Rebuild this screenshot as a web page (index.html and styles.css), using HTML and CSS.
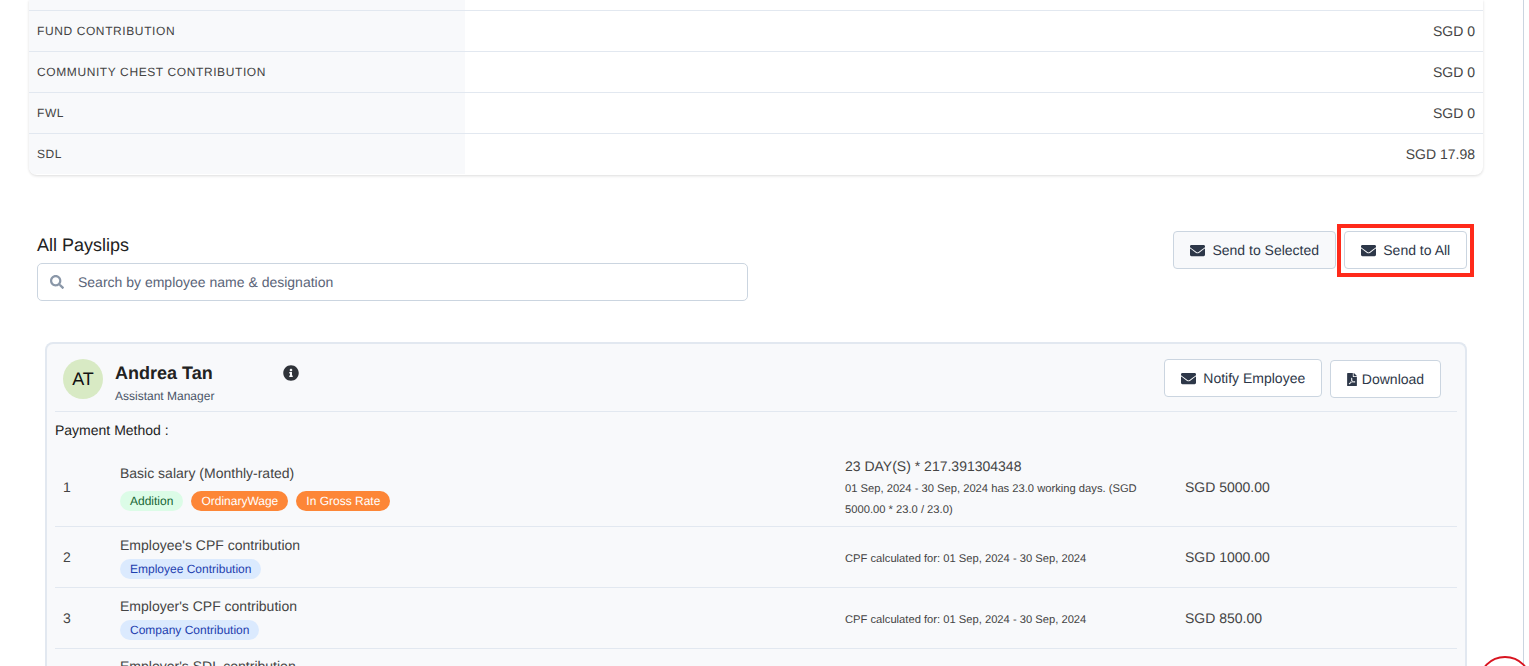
FILE: index.html
```html
<!DOCTYPE html>
<html lang="en">
<head>
<meta charset="utf-8">
<title>All Payslips</title>
<link rel="stylesheet" href="styles.css">
</head>
<body>
<svg class="sprite" width="0" height="0" aria-hidden="true">
  <symbol id="i-env" viewBox="0 0 512 512"><path d="M502.3 190.8c3.9-3.1 9.7-.2 9.7 4.7V400c0 26.5-21.5 48-48 48H48c-26.5 0-48-21.5-48-48V195.6c0-5 5.7-7.8 9.7-4.7 22.4 17.4 52.1 39.5 154.1 113.6 21.1 15.4 56.7 47.8 92.2 47.6 35.7.3 72-32.8 92.3-47.6 102-74.1 131.6-96.3 154-113.7zM256 320c23.2.4 56.6-29.2 73.4-41.4 132.7-96.3 142.8-104.7 173.4-128.7 5.8-4.5 9.2-11.5 9.2-18.9v-19c0-26.5-21.5-48-48-48H48C21.5 64 0 85.5 0 112v19c0 7.4 3.4 14.3 9.2 18.9 30.6 23.9 40.7 32.4 173.4 128.7 16.8 12.2 50.2 41.8 73.4 41.4z"/></symbol>
</svg>
<div class="page">
  <section class="summary">
    <div class="sum-row stub"><div class="sum-label"></div><div class="sum-value"></div></div>
    <div class="sum-row"><div class="sum-label">FUND CONTRIBUTION</div><div class="sum-value">SGD 0</div></div>
    <div class="sum-row"><div class="sum-label">COMMUNITY CHEST CONTRIBUTION</div><div class="sum-value">SGD 0</div></div>
    <div class="sum-row"><div class="sum-label">FWL</div><div class="sum-value">SGD 0</div></div>
    <div class="sum-row"><div class="sum-label">SDL</div><div class="sum-value">SGD 17.98</div></div>
  </section>

  <section class="list-head">
    <div class="list-left">
      <h2 class="list-title">All Payslips</h2>
      <div class="search">
        <svg class="search-icon" viewBox="0 0 512 512"><path d="M505 442.7L405.3 343c-4.5-4.5-10.6-7-17-7H372c27.6-35.3 44-79.7 44-128C416 93.1 322.9 0 208 0S0 93.1 0 208s93.1 208 208 208c48.3 0 92.7-16.4 128-44v16.3c0 6.4 2.5 12.5 7 17l99.7 99.7c9.4 9.4 24.6 9.4 33.9 0l28.3-28.3c9.4-9.4 9.4-24.6.1-34zM208 336c-70.7 0-128-57.2-128-128 0-70.7 57.2-128 128-128 70.7 0 128 57.2 128 128 0 70.7-57.2 128-128 128z"/></svg>
        <span class="search-text">Search by employee name &amp; designation</span>
      </div>
    </div>
    <div class="list-actions">
      <button class="btn btn-muted btn-selected"><svg class="btn-icon"><use href="#i-env"/></svg>Send to Selected</button>
      <div class="highlight">
        <button class="btn btn-all"><svg class="btn-icon"><use href="#i-env"/></svg>Send to All</button>
      </div>
    </div>
  </section>

  <section class="slip">
    <header class="slip-head">
      <div class="avatar">AT</div>
      <div class="person">
        <div class="person-name">Andrea Tan</div>
        <div class="person-role">Assistant Manager</div>
      </div>
      <svg class="info" viewBox="0 0 512 512"><path d="M256 8C119.043 8 8 119.083 8 256c0 136.997 111.043 248 248 248s248-111.003 248-248C504 119.083 392.957 8 256 8zm0 110c23.196 0 42 18.804 42 42s-18.804 42-42 42-42-18.804-42-42 18.804-42 42-42zm56 254c0 6.627-5.373 12-12 12h-88c-6.627 0-12-5.373-12-12v-24c0-6.627 5.373-12 12-12h12v-64h-12c-6.627 0-12-5.373-12-12v-24c0-6.627 5.373-12 12-12h64c6.627 0 12 5.373 12 12v100h12c6.627 0 12 5.373 12 12v24z"/></svg>
      <div class="slip-actions">
        <button class="btn btn-notify"><svg class="btn-icon"><use href="#i-env"/></svg>Notify Employee</button>
        <button class="btn btn-download"><svg class="pdf-icon" viewBox="0 0 384 512"><path d="M181.9 256.1c-5-16-4.9-46.9-2-46.9 8.4 0 7.6 36.9 2 46.9zm-1.7 47.2c-7.7 20.2-17.3 43.3-28.4 62.7 18.3-7 39-17.2 62.9-21.9-12.7-9.6-24.9-23.4-34.5-40.8zM86.1 428.1c0 .8 13.2-5.4 34.9-40.2-6.7 6.3-29.1 24.5-34.9 40.2zM248 160h136v328c0 13.3-10.7 24-24 24H24c-13.3 0-24-10.7-24-24V24C0 10.7 10.7 0 24 0h200v136c0 13.2 10.8 24 24 24zm-8 171.8c-20-12.2-33.3-29-42.7-53.8 4.5-18.5 11.6-46.6 6.2-64.2-4.7-29.4-42.4-26.5-47.8-6.8-5 18.3-.4 44.1 8.1 77-11.6 27.6-28.7 64.6-40.8 85.8-.1 0-.1.1-.2.1-27.1 13.9-73.6 44.5-54.5 68 5.6 6.9 16 10 21.5 10 17.9 0 35.7-18 61.1-61.8 25.8-8.5 54.1-19.1 79-23.2 21.7 11.8 47.1 19.5 64 19.5 29.2 0 31.2-32 19.7-43.4-13.9-13.6-54.3-9.7-73.6-7.2zM377 105L279 7c-4.5-4.5-10.6-7-17-7h-6v128h128v-6.1c0-6.3-2.5-12.4-7-16.9zm-74.1 255.3c4.1-2.7-2.5-11.9-42.8-9 37.1 15.8 42.8 9 42.8 9z"/></svg>Download</button>
      </div>
    </header>
    <div class="payment">Payment Method :</div>
    <div class="line line-tall">
      <div class="line-no">1</div>
      <div class="line-main">
        <div class="line-name">Basic salary (Monthly-rated)</div>
        <div class="tags tags-spaced">
          <span class="tag tag-green">Addition</span>
          <span class="tag tag-orange">OrdinaryWage</span>
          <span class="tag tag-orange">In Gross Rate</span>
        </div>
      </div>
      <div class="line-detail">
        <div class="detail-calc">23 DAY(S) * 217.391304348</div>
        <div class="detail-note detail-wrap">01 Sep, 2024 - 30 Sep, 2024 has 23.0 working days. (SGD 5000.00 * 23.0 / 23.0)</div>
      </div>
      <div class="line-amount">SGD 5000.00</div>
    </div>
    <div class="line">
      <div class="line-no">2</div>
      <div class="line-main">
        <div class="line-name">Employee's CPF contribution</div>
        <div class="tags"><span class="tag tag-blue">Employee Contribution</span></div>
      </div>
      <div class="line-detail"><div class="detail-note detail-low">CPF calculated for: 01 Sep, 2024 - 30 Sep, 2024</div></div>
      <div class="line-amount">SGD 1000.00</div>
    </div>
    <div class="line">
      <div class="line-no">3</div>
      <div class="line-main">
        <div class="line-name">Employer's CPF contribution</div>
        <div class="tags"><span class="tag tag-blue">Company Contribution</span></div>
      </div>
      <div class="line-detail"><div class="detail-note detail-low">CPF calculated for: 01 Sep, 2024 - 30 Sep, 2024</div></div>
      <div class="line-amount">SGD 850.00</div>
    </div>
    <div class="line">
      <div class="line-main line-main-last">
        <div class="line-name">Employer's SDL contribution</div>
      </div>
    </div>
  </section>
</div>
<div class="fab"></div>
</body>
</html>
```
FILE: styles.css
```css
* { box-sizing: border-box; }
html, body { margin: 0; padding: 0; height: 100%; overflow: hidden; background: #fff; }
body { font-family: "Liberation Sans", Arial, sans-serif; color: #222; position: relative; text-rendering: geometricPrecision; }
.sprite { position: absolute; }
.page { width: 1524px; height: 666px; border-right: 1px solid #cbd5e0; overflow: hidden; padding-left: 29px; }

.summary { width: 1454px; border-radius: 0 0 8px 8px; box-shadow: 0 1px 3px rgba(0,0,0,.14); background: #fff; overflow: hidden; }
.sum-row { display: flex; height: 41px; border-bottom: 1px solid #e2e8f0; font-size: 14px; color: #444; }
.sum-row:last-child { border-bottom-color: transparent; }
.stub { height: 11px; }
.sum-label { width: 436px; background: #f8f9fb; padding-left: 8px; display: flex; align-items: center; font-size: 12px; letter-spacing: .6px; }
.sum-value { flex: 1; display: flex; align-items: center; justify-content: flex-end; padding-right: 8px; }

.list-head { display: flex; justify-content: space-between; width: 1445px; margin-top: 49px; padding-left: 8px; height: 118px; }
.list-left { width: 711px; padding-top: 10px; }
.list-title { margin: 0 0 7px; font-size: 18px; font-weight: 400; line-height: 22px; color: #222; }
.search { height: 38px; border: 1px solid #cbd5e0; border-radius: 5px; display: flex; align-items: center; padding-left: 12px; background: #fff; }
.search-icon { width: 14px; height: 14px; fill: #8a97a8; margin-right: 14px; }
.search-text { font-size: 14px; color: #5a6478; }
.list-actions { display: flex; align-items: flex-start; gap: 1px; }
.btn { display: inline-flex; align-items: center; justify-content: center; height: 38px; border: 1px solid #cbd5e0; border-radius: 4px; background: #fff; color: #2d3748; font: 14px "Liberation Sans", Arial, sans-serif; text-rendering: geometricPrecision; padding: 0; }
.btn-muted { background: #f8f9fb; }
.btn-selected { width: 163px; margin-top: 7px; }
.btn-all { width: 123px; }
.btn-icon { width: 15px; height: 15px; fill: #2d3748; margin-right: 7.5px; }
.pdf-icon { width: 10px; height: 13px; fill: #2d3748; margin-right: 5px; }
.highlight { border: 4px solid #ff2a1a; padding: 3px 3px 4px; }

.slip { width: 1422px; margin-left: 16px; border: 2px solid #e2e8f0; border-bottom: 0; border-radius: 8px 8px 0 0; background: #f8f9fb; padding: 0 8px; }
.slip-head { display: flex; align-items: flex-start; height: 68px; padding: 15px 0 0 8px; border-bottom: 1px solid #e2e8f0; }
.avatar { width: 40px; height: 40px; border-radius: 50%; background: #d8eac4; color: #111; font-size: 18px; display: flex; align-items: center; justify-content: center; flex: none; }
.person { margin-left: 12px; width: 168px; }
.person-name { font-size: 18px; font-weight: 700; line-height: 28px; color: #222; }
.person-role { font-size: 12px; line-height: 16px; color: #4a5568; margin-top: 1px; }
.info { width: 16px; height: 16px; fill: #2f3339; margin-top: 6px; }
.slip-actions { margin-left: auto; display: flex; align-items: flex-start; gap: 8px; padding-right: 16px; }
.btn-notify { width: 158px; }
.btn-download { width: 111px; margin-top: 1px; }
.payment { font-size: 14px; line-height: 20px; padding: 8px 0 7px; color: #222; }
.line { display: flex; align-items: center; height: 61px; border-bottom: 1px solid #e2e8f0; font-size: 14px; color: #444; }
.line-tall { height: 80px; }
.line-no { width: 65px; padding-left: 8px; flex: none; }
.line-main { width: 725px; flex: none; }
.line-main-last { align-self: flex-start; margin-left: 65px; padding-top: 7px; }
.line-name { line-height: 20px; }
.tags { display: flex; gap: 8px; margin: 4px 0 1px; }
.tags-spaced { margin: 8px 0 0; }
.tag { font-size: 12px; line-height: 20px; padding: 0 10px; border-radius: 10px; }
.tag-green { background: #dcfce7; color: #166534; }
.tag-orange { background: #fd8637; color: #fff; }
.tag-blue { background: #dbeafe; color: #1e40af; }
.line-detail { width: 340px; flex: none; }
.detail-calc { line-height: 20px; margin-top: 4px; }
.detail-note { font-size: 11.2px; line-height: 21px; width: 300px; }
.detail-wrap { margin-top: 3px; }
.detail-low { padding-top: 5px; }
.line-amount { flex: 1; }
.fab { position: fixed; left: 1478px; top: 656px; width: 54px; height: 54px; border-radius: 50%; background: #fff; border: 2px solid #d8131f; }
```
